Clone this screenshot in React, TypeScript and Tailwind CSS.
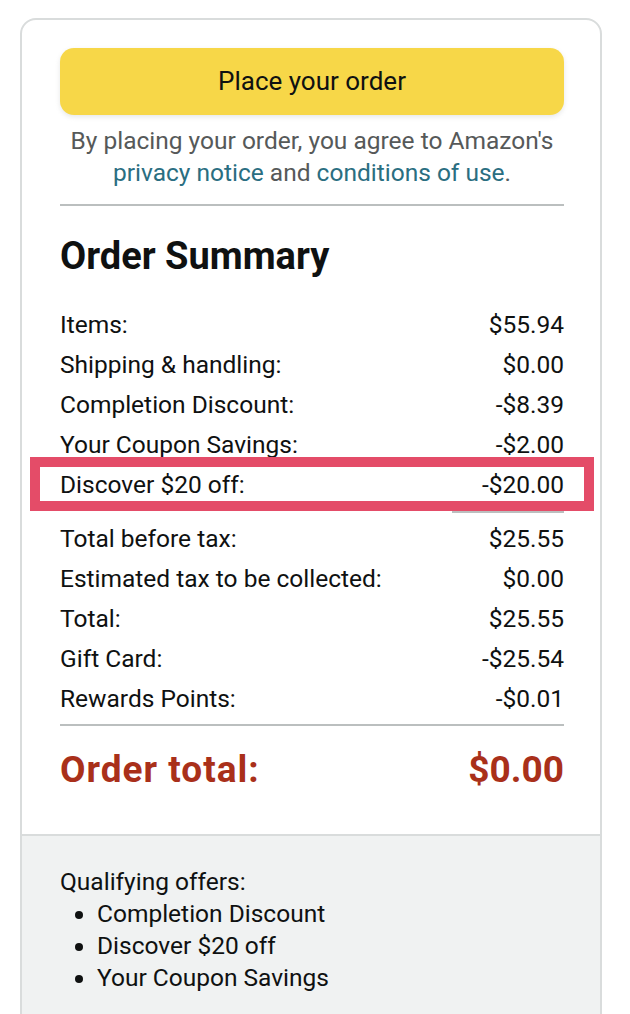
import React from "react";

const rowsTop: [string, string][] = [
  ["Items:", "$55.94"],
  ["Shipping & handling:", "$0.00"],
  ["Completion Discount:", "-$8.39"],
  ["Your Coupon Savings:", "-$2.00"],
];

const rowsBottom: [string, string][] = [
  ["Total before tax:", "$25.55"],
  ["Estimated tax to be collected:", "$0.00"],
  ["Total:", "$25.55"],
  ["Gift Card:", "-$25.54"],
  ["Rewards Points:", "-$0.01"],
];

function Row({ label, value }: { label: string; value: string }) {
  return (
    <div className="flex h-[40px] items-center justify-between">
      <span>{label}</span>
      <span>{value}</span>
    </div>
  );
}

export default function App() {
  return (
    <div
      className="h-[1014px] overflow-hidden bg-white pt-[18px] pl-[20px] text-[#0f1111]"
      style={{ fontFamily: "Roboto, 'Liberation Sans', sans-serif" }}
    >
      <div className="w-[582px] h-[1100px] rounded-t-[16px] border-2 border-[#d9dcdc] overflow-hidden flex flex-col">
        <div className="pl-[38px] pr-[36px] pt-[28px] pb-[44px]">
          <button className="w-full h-[67px] rounded-[14px] bg-[#f7d748] text-[26px] text-[#0f1111] shadow-[0_2px_5px_rgba(213,217,217,0.6)]">
            Place your order
          </button>
          <p className="mt-[10px] text-center text-[24.5px] leading-[32px] text-[#565959] whitespace-nowrap">
            By placing your order, you agree to Amazon's
            <br />
            <span className="text-[#2a6e81]">privacy notice</span> and{" "}
            <span className="text-[#2a6e81]">conditions of use</span>.
          </p>
          <div className="mt-[15px] h-[2px] bg-[#bbbfbf]" />
          <h2 className="mt-[30px] text-[38px] font-bold leading-[40px]">Order Summary</h2>
          <div className="mt-[29px] text-[24.5px]">
            {rowsTop.map(([l, v]) => (
              <Row key={l} label={l} value={v} />
            ))}
            <div className="relative">
              <Row label="Discover $20 off:" value="-$20.00" />
              <div className="absolute left-[-30px] right-[-30px] top-[-8px] bottom-[-6px] border-[10px] border-[#e44c68]" />
            </div>
            <div className="mt-[6px] flex justify-end">
              <div className="h-[2px] w-[112px] bg-[#bbbfbf]" />
            </div>
            <div className="mt-[6px]">
              {rowsBottom.map(([l, v]) => (
                <Row key={l} label={l} value={v} />
              ))}
            </div>
            <div className="mt-[5px] h-[2px] bg-[#bbbfbf]" />
            <div className="mt-[24px] flex items-center justify-between text-[37px] font-bold leading-[40px] text-[#a9301a]">
              <span className="tracking-[1px]">Order total:</span>
              <span>$0.00</span>
            </div>
          </div>
        </div>
        <div className="flex-1 border-t-2 border-[#d9dcdc] bg-[#f0f2f2] pl-[38px] pt-[30px] text-[24.5px] leading-[32px]">
          <div>Qualifying offers:</div>
          <ul className="list-disc pl-[37px]">
            <li>Completion Discount</li>
            <li>Discover $20 off</li>
            <li>Your Coupon Savings</li>
          </ul>
        </div>
      </div>
    </div>
  );
}
